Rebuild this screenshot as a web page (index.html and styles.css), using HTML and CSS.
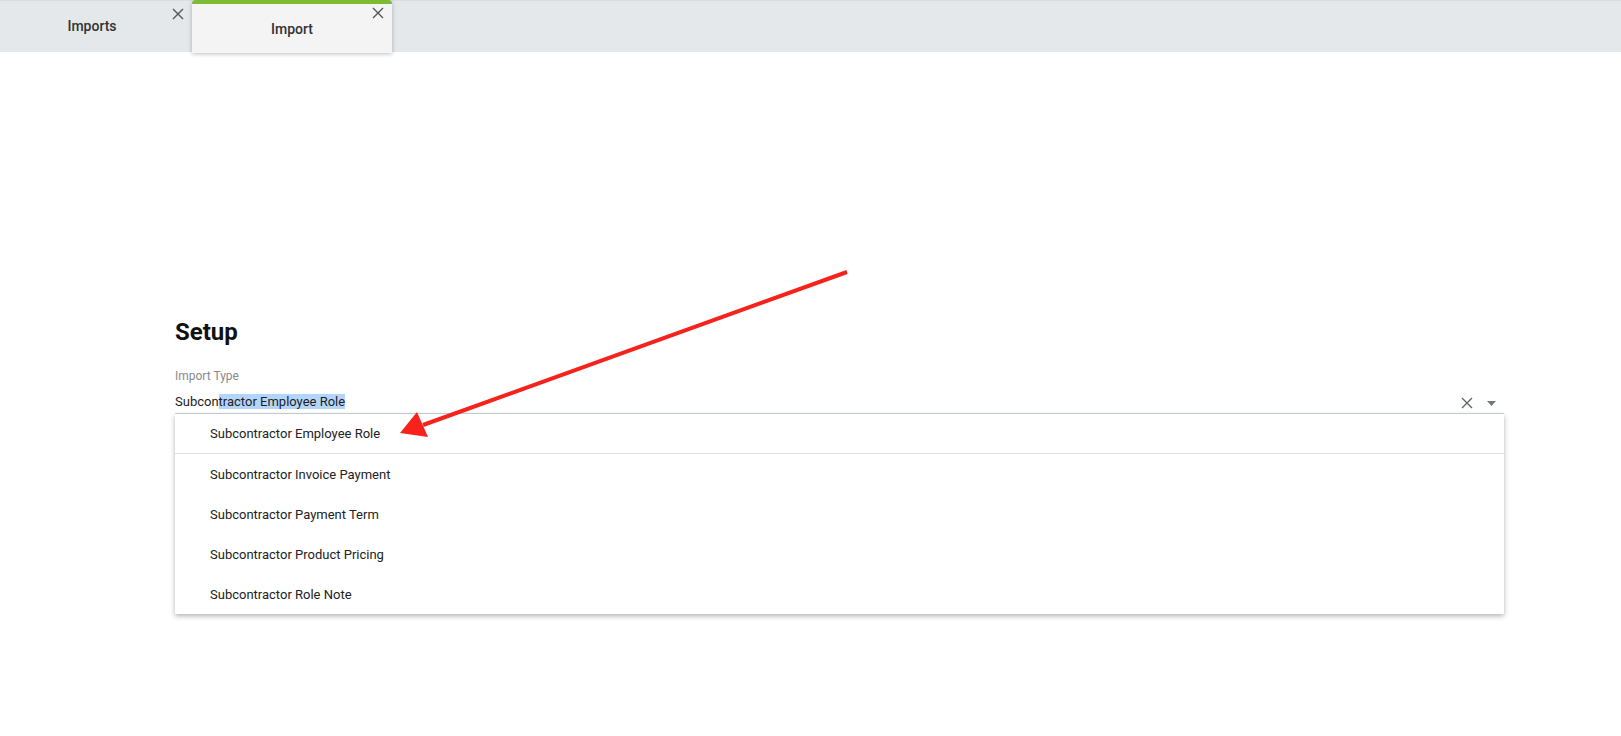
FILE: index.html
```html
<!DOCTYPE html>
<html>
<head>
<meta charset="utf-8">
<link rel="stylesheet" href="styles.css">
</head>
<body>
<div class="tabbar">
  <div class="tab">
    <span class="tab-label">Imports</span>
    <svg class="tab-close" width="12" height="12" viewBox="0 0 12 12"><path d="M1 1L11 11M11 1L1 11" stroke="#555" stroke-width="1.4" fill="none"/></svg>
  </div>
  <div class="tab active">
    <span class="tab-label">Import</span>
    <svg class="tab-close" width="12" height="12" viewBox="0 0 12 12"><path d="M1 1L11 11M11 1L1 11" stroke="#555" stroke-width="1.4" fill="none"/></svg>
  </div>
</div>
<main class="content">
  <h1 class="title">Setup</h1>
  <div class="label">Import Type</div>
  <div class="input-row">
    <span class="input-text">Subcon<span class="sel">tractor Employee Role</span></span>
    <div class="input-icons">
      <svg width="12" height="12" viewBox="0 0 12 12"><path d="M1 1L11 11M11 1L1 11" stroke="#666" stroke-width="1.4" fill="none"/></svg>
      <svg width="9" height="5" viewBox="0 0 9 5"><path d="M0 0H9L4.5 5Z" fill="#777"/></svg>
    </div>
  </div>
  <ul class="menu">
    <li class="item first">Subcontractor Employee Role</li>
    <li class="item">Subcontractor Invoice Payment</li>
    <li class="item">Subcontractor Payment Term</li>
    <li class="item">Subcontractor Product Pricing</li>
    <li class="item">Subcontractor Role Note</li>
  </ul>
</main>
<svg class="annotation" width="1621" height="736" viewBox="0 0 1621 736">
  <line x1="847" y1="272" x2="423" y2="425" stroke="#f5231b" stroke-width="4"/>
  <polygon points="400,433 417,412 428,437" fill="#f5231b"/>
</svg>
</body>
</html>
```
FILE: styles.css
```css
html, body {
  margin: 0;
  padding: 0;
  background: #fff;
  font-family: Roboto, "Liberation Sans", Arial, sans-serif;
  color: #222;
}
body {
  position: relative;
  width: 1621px;
  height: 736px;
  overflow: hidden;
}
.tabbar {
  height: 52px;
  background: #e5e8eb;
  border-top: 1px solid #d9dde1;
  box-sizing: border-box;
  display: flex;
  align-items: flex-start;
}
.tab {
  position: relative;
  width: 184px;
  height: 51px;
  display: flex;
  align-items: center;
  justify-content: center;
  font-size: 14px;
  font-weight: 500;
  color: #333;
}
.tab .tab-label {
  margin-top: -1px;
}
.tab.active {
  width: 200px;
  margin-left: 8px;
  margin-top: -1px;
  height: 53px;
  background: #f4f4f4;
  border-top: 4px solid #7dbb35;
  border-radius: 4px 4px 0 0;
  box-sizing: border-box;
  box-shadow: 0 1px 4px rgba(0,0,0,0.25);
  z-index: 1;
}
.tab.active .tab-label {
  margin-top: 0;
}
.tab-close {
  position: absolute;
  right: 0;
  top: 7px;
}
.tab.active .tab-close {
  right: 8px;
  top: 3px;
}
.content {
  padding: 0 117px 0 175px;
}
.title {
  margin: 266px 0 0;
  font-size: 24px;
  line-height: 28px;
  font-weight: 700;
  color: #111;
}
.label {
  margin-top: 23px;
  font-size: 12px;
  line-height: 14px;
  color: #8a8a8a;
}
.input-row {
  display: flex;
  align-items: center;
  justify-content: space-between;
  padding: 11px 0 3px;
  border-bottom: 1px solid #ccd4da;
}
.input-text {
  font-size: 13px;
  line-height: 16px;
  color: #1d1d1d;
}
.sel {
  background: #b4d5fb;
}
.input-icons {
  display: flex;
  align-items: center;
  gap: 14px;
  margin-right: 8px;
  margin-top: 2px;
}
.menu {
  list-style: none;
  margin: 0;
  padding: 0;
  background: #fff;
  box-shadow: 0 2px 5px rgba(0,0,0,0.3);
}
.item {
  height: 40px;
  display: flex;
  align-items: center;
  padding-left: 35px;
  font-size: 13px;
  color: #222;
}
.item.first {
  height: 39px;
  border-bottom: 1px solid #dde3e8;
}
.annotation {
  position: absolute;
  left: 0;
  top: 0;
  pointer-events: none;
}
```
